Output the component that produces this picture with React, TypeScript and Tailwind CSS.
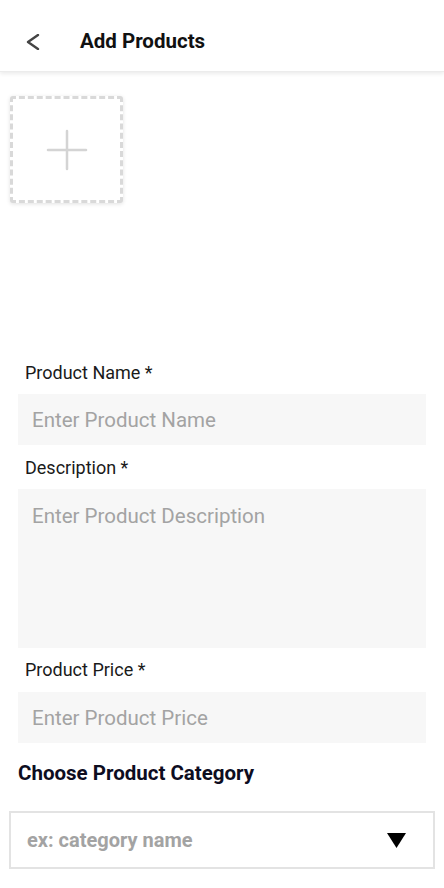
import React from "react"

export default function App() {
  return (
    <main className="min-h-screen w-full bg-white font-['Roboto','Liberation_Sans',sans-serif] text-[#1a1a1a]">
      {/* Header */}
      <header className="flex h-[72px] items-center pt-[12px] bg-white shadow-[0_2px_4px_rgba(0,0,0,0.08)] border-b border-[#ececec]">
        <svg className="ml-[25px]" width="16" height="16" viewBox="0 0 16 16" fill="none">
          <polyline points="13,1 3,8 13,15" stroke="#444" strokeWidth="2.4" strokeLinecap="round" strokeLinejoin="round" />
        </svg>
        <h1 className="ml-[39px] text-[20.5px] font-bold text-[#111]">Add Products</h1>
      </header>

      {/* Image picker */}
      <div className="mt-[24px] ml-[10px] flex h-[107px] w-[113px] items-center justify-center rounded-[3px] border-[3px] border-dashed border-[#d9d9d9] bg-white shadow-[0_1px_4px_rgba(0,0,0,0.12)]">
        <svg width="42" height="42" viewBox="0 0 42 42">
          <line x1="21" y1="2" x2="21" y2="40" stroke="#d4d4d4" strokeWidth="2.5" strokeLinecap="round" />
          <line x1="2" y1="21" x2="40" y2="21" stroke="#d4d4d4" strokeWidth="2.5" strokeLinecap="round" />
        </svg>
      </div>

      {/* Form */}
      <div className="mt-[160px] px-[18px]">
        <label className="block pl-[7px] text-[18px] leading-[20px] text-[#1a1a1a]">Product Name *</label>
        <input
          placeholder="Enter Product Name"
          className="mt-[11px] block h-[51px] w-[408px] bg-[#f7f7f7] px-[14px] text-[20.5px] outline-none placeholder:text-[#a3a3a3]"
        />

        <label className="mt-[13px] block pl-[7px] text-[18px] leading-[20px] text-[#1a1a1a]">Description *</label>
        <textarea
          placeholder="Enter Product Description"
          className="mt-[11px] block h-[159px] w-[408px] resize-none bg-[#f7f7f7] px-[14px] pt-[14px] text-[20.5px] leading-[26px] outline-none placeholder:text-[#a3a3a3]"
        />

        <label className="mt-[12px] block pl-[7px] text-[18px] leading-[20px] text-[#1a1a1a]">Product Price *</label>
        <input
          placeholder="Enter Product Price"
          className="mt-[12px] block h-[51px] w-[408px] bg-[#f7f7f7] px-[14px] text-[20.5px] outline-none placeholder:text-[#a3a3a3]"
        />

        <h2 className="mt-[18px] text-[20.5px] leading-[24px] font-bold text-[#0d0d1f]">Choose Product Category</h2>
      </div>

      <div className="mt-[26px] mx-[9px] flex h-[58px] items-center justify-between border-2 border-[#e3e3e3] pl-[16px] pr-[27px]">
        <span className="text-[20px] font-bold text-[#a3a3a3]">ex: category name</span>
        <svg width="19" height="15" viewBox="0 0 19 15">
          <polygon points="0,0 19,0 9.5,15" fill="#000" />
        </svg>
      </div>
    </main>
  )
}
